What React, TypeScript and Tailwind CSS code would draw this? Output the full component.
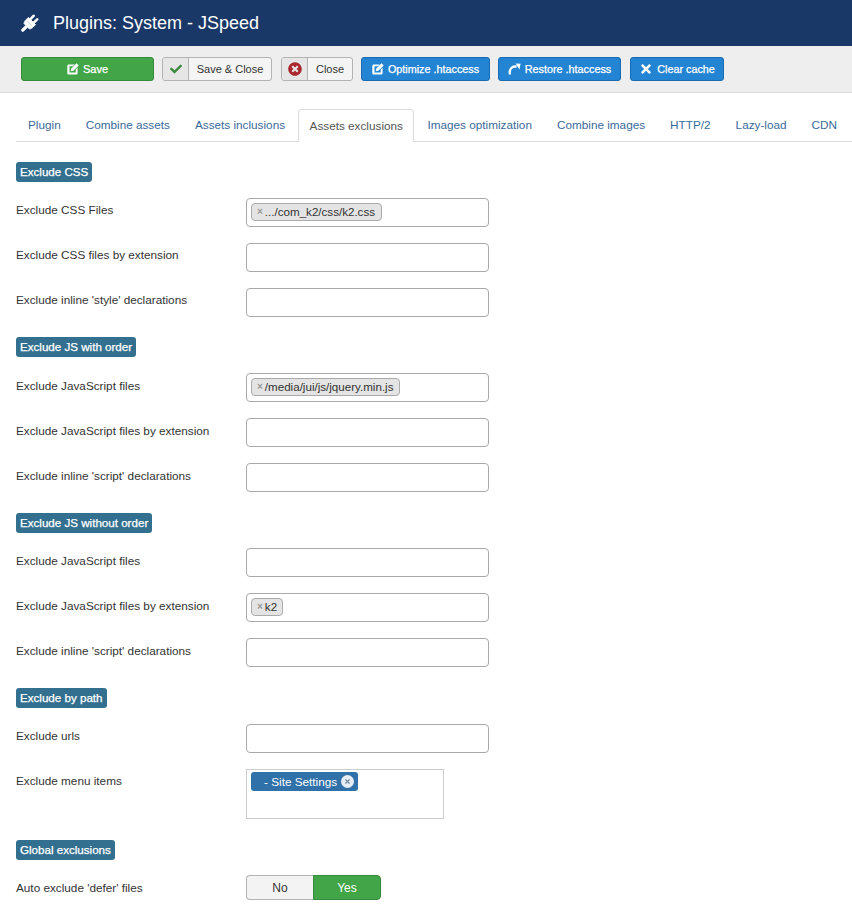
import { FaCheck, FaTimes, FaTimesCircle } from "react-icons/fa";

const PlugIcon = () => (
  <svg width="18" height="18" viewBox="0 0 18 18" className="shrink-0" fill="none" stroke="white">
    <path d="M1.8 16.2L5 13" strokeWidth="3.2" strokeLinecap="round" />
    <path d="M3 9.6C3.1 8 4 6.8 5 5.8L7.4 3.4L14.6 10.6L12.2 13C11.2 14 10 14.9 8.4 15Z" fill="white" strokeWidth="0.8" strokeLinejoin="round" />
    <path d="M9.4 5.2L12.6 1.8" strokeWidth="2.6" strokeLinecap="round" />
    <path d="M12.8 8.6L16.2 5.4" strokeWidth="2.6" strokeLinecap="round" />
    <path d="M5.6 6.8L11.2 12.4" stroke="#8c9ab2" strokeWidth="0.5" />
  </svg>
);

const EditIcon = () => (
  <svg width="12" height="12" viewBox="0 0 12 12" className="shrink-0" fill="currentColor">
    <path d="M0.3 3C0.3 2.1 1 1.4 1.9 1.4H7.8L5.9 3.3H2.5V9.5H8.7V6.4L10.6 4.5V10C10.6 10.9 9.9 11.6 9 11.6H1.9C1 11.6 0.3 10.9 0.3 10Z" />
    <path d="M9.6 0.3L11.7 2.4L6.4 7.7L3.7 8.3L4.3 5.6Z" />
  </svg>
);

const RedoIcon = () => (
  <svg width="13" height="12" viewBox="0 0 13 12" className="shrink-0" fill="none">
    <path d="M2 11.5C0.8 6.5 3.8 2.8 8.6 3.6" stroke="currentColor" strokeWidth="2.3" />
    <path d="M7.6 0.6L12.6 0.8L11.4 6.4Z" fill="currentColor" />
  </svg>
);

const strong = "[-webkit-text-stroke:0.25px_white]";

function BlueBtn({ icon, label, w }: { icon: React.ReactNode; label: string; w: string }) {
  return (
    <button className={`flex h-6 items-center justify-center gap-1 rounded-[3px] border border-[#1c6ab0] bg-[#2384d3] text-[10.8px] text-white ${strong} ${w}`}>
      {icon}
      {label}
    </button>
  );
}

function IconBtn({ icon, label, w }: { icon: React.ReactNode; label: string; w: string }) {
  return (
    <button className={`flex h-6 items-stretch rounded-[3px] border border-[#b3b3b3] bg-[#f4f4f4] text-[11px] text-[#333] ${w}`}>
      <span className="flex w-[26px] shrink-0 items-center justify-center rounded-l-[3px] border-r border-[#b3b3b3] bg-[#e6e6e6]">{icon}</span>
      <span className="flex flex-1 items-center justify-center">{label}</span>
    </button>
  );
}

function Badge({ text }: { text: string }) {
  return (
    <div className="flex">
      <span className={`flex h-5 items-center rounded-[3px] bg-[#33708f] px-1 text-[11.6px] leading-4 text-white ${strong}`}>{text}</span>
    </div>
  );
}

function Chip({ text, w }: { text: string; w: string }) {
  return (
    <span className={`flex h-[18px] items-center rounded-[4px] border border-[#aaa] bg-[#e4e4e4] pl-[5px] text-[11.6px] leading-4 text-[#333] ${w}`}>
      <span className="mr-[2px] text-[10px] leading-none font-bold text-[#999]">×</span>
      {text}
    </span>
  );
}

function Row({ label, chip, low }: { label: string; chip?: React.ReactNode; low?: boolean }) {
  return (
    <div className="mt-4 flex first:mt-0">
      <div className={`w-[230px] text-[11.75px] leading-4 text-[#333] ${low ? "pt-[5px]" : "pt-[4px]"}`}>{label}</div>
      <div className="flex h-[29px] w-[243px] items-start rounded-[4px] border border-[#a9a9a9] bg-white px-[4px] pt-[4px]">{chip}</div>
    </div>
  );
}

const tabs = ["Plugin", "Combine assets", "Assets inclusions", "Assets exclusions", "Images optimization", "Combine images", "HTTP/2", "Lazy-load", "CDN"];

export default function App() {
  return (
    <div className="h-[909px] w-[852px] overflow-hidden bg-white font-['Liberation_Sans',Arial,sans-serif]">
      <header className="flex h-[46px] items-center bg-[#1a3867] pl-[21px] text-white">
        <PlugIcon />
        <h1 className="ml-[14px] text-lg font-normal">Plugins: System - JSpeed</h1>
      </header>

      <div className="flex h-[47px] items-start border-b border-[#dcdcdc] bg-[#eeeeee] pt-[11px] pl-[21px]">
        <button className={`flex h-6 w-[133px] items-center justify-center gap-1 rounded-[3px] border border-[#37893b] bg-[#42a548] text-[11px] text-white ${strong}`}>
          <EditIcon />
          Save
        </button>
        <div className="ml-2"><IconBtn icon={<FaCheck className="size-3 text-[#3d8b41]" />} label="Save & Close" w="w-[110px]" /></div>
        <div className="ml-[9px]"><IconBtn icon={<FaTimesCircle className="size-[14px] text-[#a8262c]" />} label="Close" w="w-[72px]" /></div>
        <div className="ml-2"><BlueBtn icon={<EditIcon />} label="Optimize .htaccess" w="w-[129px]" /></div>
        <div className="ml-2"><BlueBtn icon={<RedoIcon />} label="Restore .htaccess" w="w-[123px]" /></div>
        <div className="ml-[9px]"><BlueBtn icon={<FaTimes className="size-[14px]" />} label="Clear cache" w="w-[94px]" /></div>
      </div>

      <nav className="mt-4 ml-4 flex h-[33px] border-b border-[#dddddd] text-[11.75px] whitespace-nowrap">
        {tabs.map((t) => {
          const active = t === "Assets exclusions";
          return (
            <div
              key={t}
              className={
                active
                  ? "mr-px flex h-[33px] shrink-0 items-center rounded-t-[4px] border border-b-0 border-[#dddddd] bg-white px-[10.5px] text-[#555]"
                  : "mr-px flex h-[32px] shrink-0 items-center px-3 text-[#3a6a9c]"
              }
            >
              {t}
            </div>
          );
        })}
      </nav>

      <main className="px-4 pt-[20px]">
        <section>
          <Badge text="Exclude CSS" />
          <div className="mt-4">
            <Row label="Exclude CSS Files" chip={<Chip text=".../com_k2/css/k2.css" w="w-[131px]" />} />
            <Row label="Exclude CSS files by extension" />
            <Row label="Exclude inline 'style' declarations" />
          </div>
        </section>
        <section className="mt-5">
          <Badge text="Exclude JS with order" />
          <div className="mt-4">
            <Row low label="Exclude JavaScript files" chip={<Chip text="/media/jui/js/jquery.min.js" w="w-[149px]" />} />
            <Row low label="Exclude JavaScript files by extension" />
            <Row low label="Exclude inline 'script' declarations" />
          </div>
        </section>
        <section className="mt-[21px]">
          <Badge text="Exclude JS without order" />
          <div className="mt-[15px]">
            <Row low label="Exclude JavaScript files" />
            <Row low label="Exclude JavaScript files by extension" chip={<Chip text="k2" w="w-[32px]" />} />
            <Row low label="Exclude inline 'script' declarations" />
          </div>
        </section>
        <section className="mt-[21px]">
          <Badge text="Exclude by path" />
          <div className="mt-4">
            <Row label="Exclude urls" />
            <div className="mt-4 flex">
              <div className="w-[230px] pt-[4px] text-[11.75px] leading-4 text-[#333]">Exclude menu items</div>
              <div className="h-[50px] w-[198px] border border-[#cccccc] bg-white pt-[2px] pl-[4px]">
                <div className="flex h-[19px] w-[107px] items-center rounded-[3px] bg-[#3071a9] pl-[13px] text-[11.75px] leading-4 text-white">
                  - Site Settings
                  <span className="ml-[4px] flex size-[13px] items-center justify-center rounded-full bg-[#e8eef5] text-[#7f8fa3]">
                    <FaTimes className="size-[7px]" />
                  </span>
                </div>
              </div>
            </div>
          </div>
        </section>
        <section className="mt-[21px]">
          <Badge text="Global exclusions" />
          <div className="mt-[15px] flex">
            <div className="w-[230px] pt-[5px] text-[11.75px] leading-4 text-[#333]">Auto exclude 'defer' files</div>
            <div className="flex h-[25px] w-[135px] text-xs">
              <span className="flex w-[67px] items-center justify-center rounded-l-[4px] border border-r-0 border-[#b3b3b3] bg-[#f3f3f3] text-[#333]">No</span>
              <span className="flex flex-1 items-center justify-center rounded-r-[4px] border border-[#37893b] bg-[#42a548] text-white">Yes</span>
            </div>
          </div>
        </section>
      </main>
    </div>
  );
}
